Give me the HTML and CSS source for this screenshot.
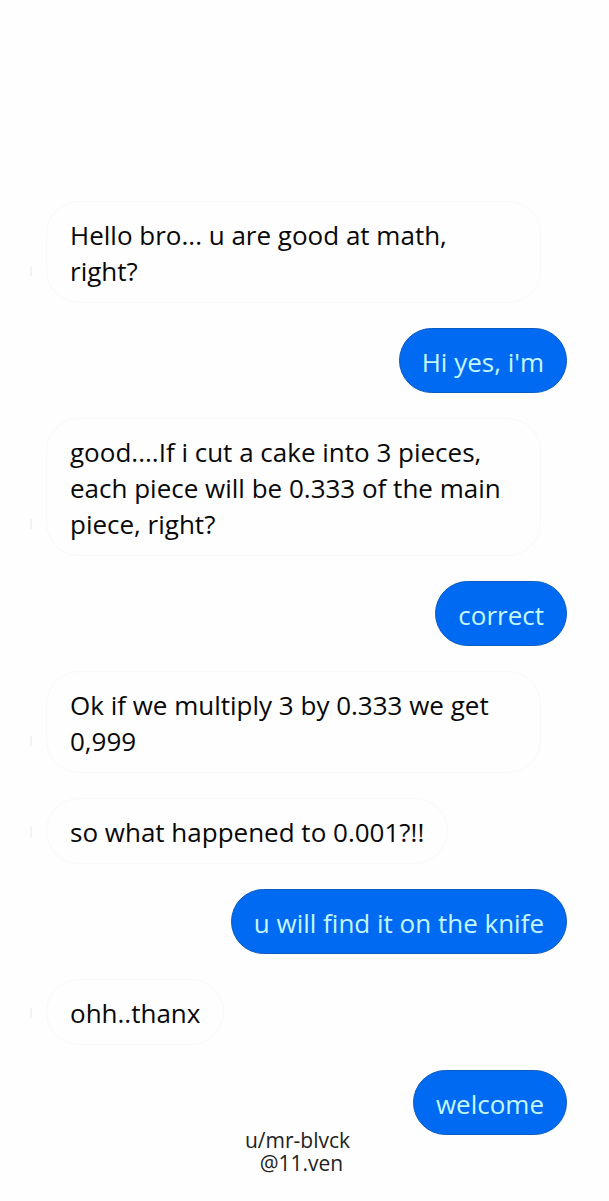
FILE: index.html
```html
<!DOCTYPE html>
<html lang="en">
<head>
<meta charset="utf-8">
<meta name="viewport" content="width=device-width, initial-scale=1">
<title>Chat</title>
<link rel="stylesheet" href="styles.css">
</head>
<body>
<main class="chat">
  <p class="bubble received">Hello bro... u are good at math, right?</p>
  <p class="bubble sent">Hi yes, i'm</p>
  <p class="bubble received">good....If i cut a cake into 3 pieces, each piece will be 0.333 of the main piece, right?</p>
  <p class="bubble sent">correct</p>
  <p class="bubble received">Ok if we multiply 3 by 0.333 we get 0,999</p>
  <p class="bubble received">so what happened to 0.001?!!</p>
  <p class="bubble sent">u will find it on the knife</p>
  <p class="bubble received">ohh..thanx</p>
  <p class="bubble sent">welcome</p>
</main>
<footer class="credit">
  <span>u/mr-blvck</span>
  <span class="handle">@11.ven</span>
</footer>
</body>
</html>
```
FILE: styles.css
```css
body {
  margin: 0;
  background: #fefefe;
  color: #080808;
  font-family: "Open Sans", "Noto Sans", sans-serif;
}

.chat {
  display: flex;
  flex-direction: column;
  gap: 25px;
  padding: 201px 42px 0 46px;
}

.bubble {
  position: relative;
  box-sizing: border-box;
  max-width: 495px;
  margin: 0;
  border: 1px solid #f9f9f9;
  border-radius: 33px;
  padding: 15px 23px 13px;
  font-size: 26px;
  line-height: 36px;
}

.received {
  align-self: flex-start;
}

/* faint avatar edge beside each incoming message */
.received::before {
  content: "";
  position: absolute;
  bottom: 26px;
  left: -17px;
  width: 2px;
  height: 10px;
  background: #f3f3f3;
}

.sent {
  align-self: flex-end;
  border-color: #0b5bc0;
  padding: 15px 22px 12px;
  background: #016af2;
  color: #c4f8ff;
}

.credit {
  display: flex;
  flex-direction: column;
  align-items: center;
  margin-top: -6px;
  padding-right: 14px;
  color: #222;
  font-size: 21px;
  line-height: 23px;
}

.handle {
  padding-left: 8px;
}
```
